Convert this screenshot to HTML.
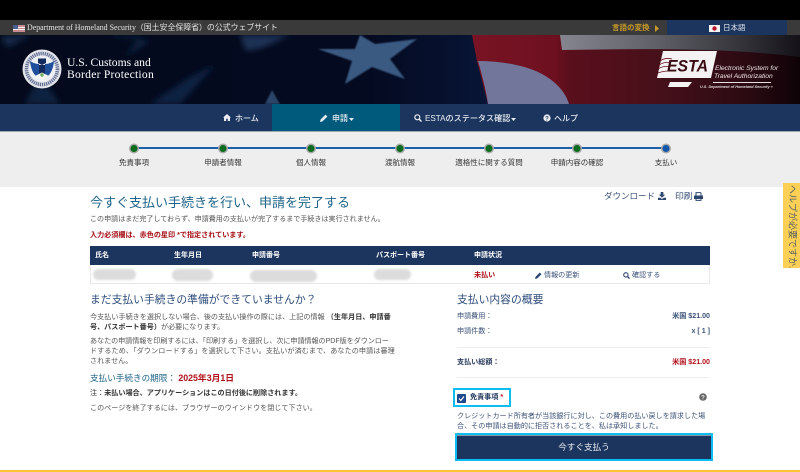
<!DOCTYPE html>
<html lang="ja"><head><meta charset="utf-8"><title>ESTA</title>
<style>
html,body{margin:0;padding:0;background:#fff}
body{width:800px;height:472px;position:relative;overflow:hidden;font-family:"Liberation Sans","Noto Sans CJK JP",sans-serif;color:#555}
#w{position:absolute;left:0;top:0;width:800px;height:472px;overflow:hidden;filter:blur(.3px)}
.a{position:absolute}
.t{position:absolute;white-space:nowrap;line-height:10px;font-size:7.1px}
.b{font-weight:700}
.h{color:#e9edf3;font-size:8px;font-weight:500}
.s{color:#333;font-size:7.5px;transform:translateX(-50%)}
.dot{position:absolute;top:144.5px;width:7px;height:7px;border-radius:50%;background:#0a6a1e;box-shadow:0 0 0 1.5px #aaa;transform:translateX(-50%)}
.th{color:#fff;font-weight:700;font-size:7px}
.blur{position:absolute;background:#dcdcdc;border-radius:7px;filter:blur(1px)}
.n{color:#3b5278}
</style></head><body><div id="w">
<div class="a" style="left:0;top:0;width:800px;height:20px;background:#000"></div>
<div class="a" style="left:0;top:20px;width:800px;height:15px;background:#3a3a3a"></div>
<svg class="a" style="left:13px;top:25px" width="12" height="7" viewBox="0 0 12 7"><rect width="12" height="7" fill="#c98a90"/><rect y="2" width="12" height="1" fill="#eee"/><rect y="4" width="12" height="1" fill="#eee"/><rect width="5" height="4" fill="#4a5f90"/></svg>
<div class="t" style="left:27px;top:22.5px;color:#e4e4e4;font-size:7.9px;font-family:'Liberation Serif','Noto Sans CJK JP',serif">Department of Homeland Security（国土安全保障省）の公式ウェブサイト</div>
<div class="t b" style="left:612px;top:22.5px;color:#c79a28;font-size:7.5px">言語の変換</div>
<svg class="a" style="left:655px;top:25px" width="5" height="7"><path d="M0 0L4 3.5L0 7Z" fill="#c79a28"/></svg>
<div class="a" style="left:667px;top:20px;width:120px;height:15px;background:#1c355e"></div>
<svg class="a" style="left:709px;top:25px" width="11" height="7"><rect width="11" height="7" fill="#f4f4f4"/><circle cx="5.5" cy="3.5" r="2.2" fill="#b8142a"/></svg>
<div class="t" style="left:723px;top:22.5px;color:#dfe5ee;font-size:7.5px">日本語</div>

<svg class="a" style="left:0;top:35px" width="800" height="69" viewBox="0 0 800 69">
<defs><filter id="f" x="-20%" y="-40%" width="140%" height="180%"><feGaussianBlur stdDeviation="3"/></filter>
<filter id="g" x="-10%" y="-10%" width="120%" height="120%"><feGaussianBlur stdDeviation=".8"/></filter>
<linearGradient id="d" x1="0" x2="1"><stop offset="0" stop-color="#040a1c"/><stop offset=".75" stop-color="#040a20"/><stop offset="1" stop-color="#081536"/></linearGradient>
<linearGradient id="r" x1="0" x2="1"><stop offset="0" stop-color="#7a1424"/><stop offset=".28" stop-color="#6e1020"/><stop offset=".32" stop-color="#5a0f1c"/><stop offset=".6" stop-color="#45101a"/><stop offset=".85" stop-color="#2a0a12"/><stop offset="1" stop-color="#0e0206"/></linearGradient>
<linearGradient id="g2" x1="0" x2="1"><stop offset="0" stop-color="#85858f"/><stop offset=".4" stop-color="#606068"/><stop offset=".75" stop-color="#34343a"/><stop offset="1" stop-color="#141218"/></linearGradient></defs>
<rect x="460" width="340" height="69" fill="url(#r)"/>
<path d="M0 0H472L477 26L488 69H0Z" fill="url(#d)"/>
<path d="M560 0H800V22C720 12 640 14 562 15Z" fill="url(#g2)"/>
<path d="M478 26C500 26 525 30 540 38C556 46 566 58 569 69H488C486 55 482 40 478 26Z" fill="#71769a"/>
<path d="M318 14L355 14L360 0L375 9L417 4L390 24L405 44L372 32L345 49L352 26Z" fill="#3a5a82" filter="url(#g)"/>
<path d="M240 0L290 0L262 13L246 16Z" fill="#1d3355" filter="url(#f)"/>
<path d="M40 40L60 69H25Z" fill="#0e2240" filter="url(#f)"/><path d="M190 42L215 30L180 69H150Z" fill="#0f2342" filter="url(#f)"/>
<path d="M0 2L30 0L8 12Z" fill="#132a4c" filter="url(#f)"/><path d="M100 0L150 6L125 22L140 2Z" fill="#0e2140" filter="url(#f)"/>
<path d="M265 69L272 55L280 69Z" fill="#2a4468" filter="url(#g)"/>
</svg>

<svg class="a" style="left:22px;top:49px" width="40" height="40" viewBox="0 0 40 40">
<circle cx="20" cy="20" r="19.5" fill="#e4e6ec"/>
<circle cx="20" cy="20" r="15.5" fill="none" stroke="#3a4a78" stroke-width="3.6" stroke-dasharray="1.3 .8" opacity=".75"/>
<circle cx="20" cy="20" r="13" fill="#eef0f4"/>
<path d="M8 12C11 14 14 15 17 15V28C13 28 9 22 8 12ZM32 12C29 14 26 15 23 15V28C27 28 31 22 32 12Z" fill="#1f4f9a"/>
<path d="M16 9.500H24V14L20 16L16 14ZM17 16H23V25L20 27L17 25Z" fill="#122a5e"/>
<path d="M13 27L20 23.500L27 27L20 31Z" fill="#f6f6f6"/><circle cx="20" cy="26" r="1.700" fill="#6faf5a"/>
</svg>
<div class="t" style="left:67px;top:58px;color:#fff;font-size:11.600px;font-family:'Liberation Serif',serif">U.S. Customs and</div>
<div class="t" style="left:67px;top:70px;color:#fff;font-size:11.600px;letter-spacing:.25px;font-family:'Liberation Serif',serif">Border Protection</div>

<svg class="a" style="left:655px;top:49px" width="62" height="42" viewBox="0 0 62 42">
<path d="M8 2H62L56 29H2Z" fill="#f4f2f2"/><path d="M15 33H37L33 38H13Z" fill="#f4f2f2"/>
<path d="M5 12C9 9 13 9 17 10M4 16C9 13 13 13 16 14M3 20C8 17 12 17 15 18M3 24C8 22 11 22 14 22" stroke="#6b1420" stroke-width=".8" fill="none"/>
<text x="12" y="22.500" font-family="Liberation Sans" font-weight="700" font-style="italic" font-size="17" fill="#3a0d15" textLength="41" lengthAdjust="spacingAndGlyphs">ESTA</text></svg>
<div class="t" style="left:715px;top:64px;color:#f0e8ea;font-size:6.700px;font-style:italic">Electronic System for</div>
<div class="t" style="left:714px;top:72px;color:#f0e8ea;font-size:6.700px;font-style:italic">Travel Authorization</div>
<div class="a" style="left:713px;top:82px;width:58px;height:.7px;background:#e8dfe0"></div>
<div class="t" style="left:700px;top:81.500px;color:#e0d8da;font-size:3.800px;font-weight:700;font-style:italic">U.S. Department of Homeland Security ≡</div>

<div class="a" style="left:0;top:104px;width:800px;height:27px;background:#1c355e"></div>
<div class="a" style="left:272px;top:104px;width:128px;height:27px;background:#005a7c"></div>
<svg class="a" style="left:223px;top:114px" width="8" height="7" viewBox="0 0 8 7"><path d="M4 0L8 3.500H7V7H4.800V4.800H3.200V7H1V3.500H0Z" fill="#e9edf3"/></svg>
<div class="t h" style="left:235px;top:113.500px">ホーム</div>
<svg class="a" style="left:320px;top:114px" width="8" height="8" viewBox="0 0 8 8"><path d="M0 8L.6 5.500L5.500 .6L7.400 2.500L2.500 7.400Z" fill="#e9edf3"/></svg>
<div class="t h" style="left:332px;top:113.500px">申請</div>
<svg class="a" style="left:349px;top:117.500px" width="5" height="3"><path d="M0 0H5L2.500 3Z" fill="#e9edf3"/></svg>
<svg class="a" style="left:414px;top:114px" width="8" height="8" viewBox="0 0 8 8"><circle cx="3.300" cy="3.300" r="2.500" fill="none" stroke="#e9edf3" stroke-width="1.200"/><path d="M5 5L7.500 7.500" stroke="#e9edf3" stroke-width="1.500"/></svg>
<div class="t h" style="left:425px;top:113.500px;font-size:8.100px">ESTAのステータス確認</div>
<svg class="a" style="left:511px;top:117.500px" width="5" height="3"><path d="M0 0H5L2.500 3Z" fill="#e9edf3"/></svg>
<svg class="a" style="left:543px;top:114px" width="8" height="8" viewBox="0 0 8 8"><circle cx="4" cy="4" r="3.600" fill="#e9edf3"/><text x="4" y="6.300" text-anchor="middle" font-size="6" font-weight="700" fill="#1c355e" font-family="Liberation Sans">?</text></svg>
<div class="t h" style="left:554px;top:113.500px">ヘルプ</div>

<div class="a" style="left:0;top:131px;width:800px;height:56px;background:#eee"></div>
<div class="a" style="left:0;top:131px;width:800px;height:1px;background:#9aa"></div>
<div class="a" style="left:134px;top:147px;width:532px;height:2px;background:#1a5fa8"></div>
<div class="dot" style="left:134px"></div><div class="dot" style="left:223px"></div><div class="dot" style="left:311px"></div><div class="dot" style="left:400px"></div><div class="dot" style="left:489px"></div><div class="dot" style="left:577px"></div><div class="dot" style="left:666px;background:#1358a8"></div>
<div class="t s" style="left:134px;top:158px">免責事項</div>
<div class="t s" style="left:223px;top:158px">申請者情報</div>
<div class="t s" style="left:311px;top:158px">個人情報</div>
<div class="t s" style="left:400px;top:158px">渡航情報</div>
<div class="t s" style="left:489px;top:158px">適格性に関する質問</div>
<div class="t s" style="left:577px;top:158px">申請内容の確認</div>
<div class="t s" style="left:666px;top:158px">支払い</div>

<div class="t" style="left:90px;top:198px;font-size:13px;color:#1f6488">今すぐ支払い手続きを行い、申請を完了する</div>
<div class="t" style="left:90px;top:215px;font-size:7.050px;color:#555">この申請はまだ完了しておらず、申請費用の支払いが完了するまで手続きは実行されません。</div>
<div class="t b" style="left:90px;top:230px;font-size:7.100px;color:#a50f14">入力必須欄は、赤色の星印 *で指定されています。</div>

<div class="t n" style="left:604px;top:191px;font-size:8.500px">ダウンロード</div>
<svg class="a" style="left:658px;top:192px" width="8" height="8" viewBox="0 0 9 9"><path d="M3 0H6V3H8L4.500 6.500L1 3H3ZM0 6.500H2.500L4.500 8L6.500 6.500H9V9H0Z" fill="#2c4670"/></svg>
<div class="t n" style="left:675px;top:191px;font-size:8.800px">印刷</div>
<svg class="a" style="left:694px;top:192px" width="9" height="9" viewBox="0 0 9 9"><path d="M2 3.500V.6H6.500L7 1.200V3.500M2 6.500H7V8.400H2Z" fill="none" stroke="#2c4670" stroke-width="1"/><path d="M0 3.500H9V7H7.500V6H1.500V7H0Z" fill="#2c4670"/></svg>

<div class="a" style="left:782.500px;top:183px;width:17.500px;height:85px;background:#fcd056"></div>
<div class="t" style="left:787.500px;top:185px;font-size:9px;line-height:10px;color:#56605e;writing-mode:vertical-rl;text-orientation:sideways">ヘルプが必要ですか.</div>

<div class="a" style="left:90px;top:246px;width:620px;height:38px;border:1px solid #e8e8e8;border-top:0;box-sizing:border-box"></div>
<div class="a" style="left:90px;top:246px;width:620px;height:19px;background:#1c355e"></div>
<div class="t th" style="left:95px;top:250.500px">氏名</div>
<div class="t th" style="left:174px;top:250.500px">生年月日</div>
<div class="t th" style="left:252px;top:250.500px">申請番号</div>
<div class="t th" style="left:376px;top:250.500px">パスポート番号</div>
<div class="t th" style="left:474px;top:250.500px">申請状況</div>
<div class="blur" style="left:93px;top:269px;width:43px;height:11px"></div>
<div class="blur" style="left:172px;top:269px;width:41px;height:12px"></div>
<div class="blur" style="left:250px;top:270px;width:67px;height:12px"></div>
<div class="blur" style="left:374px;top:269px;width:37px;height:11px"></div>
<div class="t b" style="left:474px;top:270px;color:#b0101a">未払い</div>
<svg class="a" style="left:535px;top:271.500px" width="7" height="7" viewBox="0 0 8 8"><path d="M0 8L.6 5.500L5.500 .6L7.400 2.500L2.500 7.400Z" fill="#2c4670"/></svg>
<div class="t n" style="left:544px;top:270px">情報の更新</div>
<svg class="a" style="left:623px;top:271.500px" width="7" height="7" viewBox="0 0 8 8"><circle cx="3.300" cy="3.300" r="2.500" fill="none" stroke="#2c4670" stroke-width="1.200"/><path d="M5 5L7.500 7.500" stroke="#2c4670" stroke-width="1.500"/></svg>
<div class="t n" style="left:632px;top:270px">確認する</div>

<div class="t" style="left:90px;top:295px;font-size:10.800px;color:#2e4d7c">まだ支払い手続きの準備ができていませんか？</div>
<div class="t" style="left:90px;top:311.500px;letter-spacing:.02px">今支払い手続きを選択しない場合、後の支払い操作の際には、上記の情報 <b style="color:#333">（生年月日、申請番</b></div>
<div class="t" style="left:90px;top:321.500px"><b style="color:#333">号、パスポート番号）</b>が必要になります。</div>
<div class="t" style="left:90px;top:336px;letter-spacing:-.06px">あなたの申請情報を印刷するには、「印刷する」を選択し、次に申請情報のPDF版をダウンロー</div>
<div class="t" style="left:90px;top:346px;letter-spacing:.09px">ドするため、「ダウンロードする」を選択して下さい。支払いが済むまで、あなたの申請は審理</div>
<div class="t" style="left:90px;top:356px">されません。</div>
<div class="t" style="left:90px;top:373px;font-size:8.600px;color:#1f6488">支払い手続きの期限： <span style="color:#b0101a;font-weight:700;font-size:8.800px">2025年3月1日</span></div>
<div class="t" style="left:90px;top:388px;color:#333">注：<b>未払い場合、アプリケーションはこの日付後に削除されます。</b></div>
<div class="t" style="left:90px;top:403px">このページを終了するには、ブラウザーのウインドウを閉じて下さい。</div>

<div class="t" style="left:457px;top:295px;font-size:10.800px;color:#2e4d7c">支払い内容の概要</div>
<div class="t n" style="left:457px;top:311px">申請費用：</div>
<div class="t b n" style="right:90px;top:311px">米国 $21.00</div>
<div class="t n" style="left:457px;top:326px">申請件数：</div>
<div class="t b n" style="right:90px;top:326px">x [ 1 ]</div>
<div class="a" style="left:457px;top:347px;width:253px;height:1px;background:#eee"></div>
<div class="t b" style="left:457px;top:357px;color:#2c3e5e">支払い総額：</div>
<div class="t b" style="right:90px;top:357px;color:#b0101a">米国 $21.00</div>
<div class="a" style="left:457px;top:377px;width:253px;height:1px;background:#eee"></div>
<div class="a" style="left:453px;top:388px;width:58px;height:19px;box-sizing:border-box;border:2px solid #0cbcf2"></div>
<svg class="a" style="left:457px;top:394px" width="9" height="9" viewBox="0 0 9 9"><rect width="9" height="9" rx="1" fill="#1c4a8c"/><path d="M2 4.500L3.800 6.500L7 2.500" fill="none" stroke="#fff" stroke-width="1.200"/></svg>
<div class="t b" style="left:470px;top:392px;color:#22385c">免責事項 <span style="color:#c01020">*</span></div>
<svg class="a" style="left:699px;top:393px" width="8" height="8" viewBox="0 0 8 8"><circle cx="4" cy="4" r="3.800" fill="#666"/><text x="4" y="6.400" text-anchor="middle" font-size="6" font-weight="700" fill="#eee" font-family="Liberation Sans">?</text></svg>
<div class="t n" style="left:457px;top:411px">クレジットカード所有者が当該銀行に対し、この費用の払い戻しを請求した場</div>
<div class="t n" style="left:457px;top:421px">合、その申請は自動的に拒否されることを、私は承知しました。</div>
<div class="a" style="left:455px;top:433px;width:258px;height:28px;box-sizing:border-box;border:2px solid #0cbcf2;background:#1c355e;box-shadow:inset 0 1px 0 #8a96a8"></div>
<div class="t" style="left:455px;width:258px;text-align:center;top:442px;color:#e9edf3;font-size:8.600px">今すぐ支払う</div>
<div class="a" style="left:0;top:470px;width:800px;height:2px;background:#fbc531"></div>
</div></body></html>
